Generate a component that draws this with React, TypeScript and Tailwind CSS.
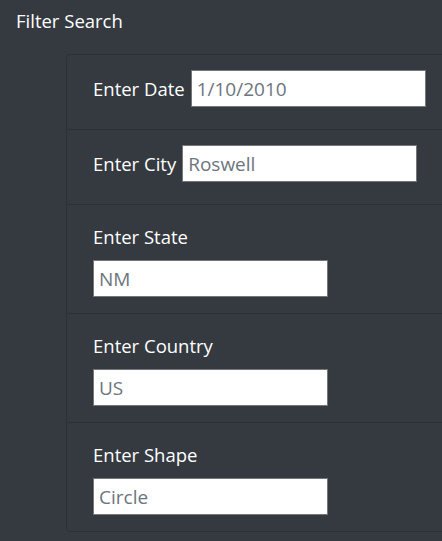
import React from 'react'

type fieldType = {
    label: string,
    value: string,
    inline?: boolean,
}

const fields: fieldType[] = [
    { label: 'Enter Date', value: '1/10/2010', inline: true },
    { label: 'Enter City', value: 'Roswell', inline: true },
    { label: 'Enter State', value: 'NM' },
    { label: 'Enter Country', value: 'US' },
    { label: 'Enter Shape', value: 'Circle' },
]

const Field = ({ label, value, inline }: fieldType) => {
    const input = (
        <input
            type="text"
            defaultValue={value}
            className="w-[235px] h-[37px] bg-white border border-[#767676] px-[5px] text-[19px] text-[#6c757d] outline-none"
        />
    )

    if (inline) {
        return (
            <li className="flex items-center gap-[6px] pl-[26px] pt-[15px] pb-[22px] border-t border-[#2c3136] first:border-t-0">
                <label className="text-[18.5px] leading-[30px] text-white">{label}</label>
                {input}
            </li>
        )
    }

    return (
        <li className="flex flex-col items-start pl-[26px] pt-[17px] pb-[16px] border-t border-[#2c3136]">
            <label className="text-[18.5px] leading-[30px] text-white mb-[8px]">{label}</label>
            {input}
        </li>
    )
}

export default function App() {
    return (
        <div className="w-full h-[541px] overflow-hidden bg-[#343a40] font-['Open_Sans',sans-serif]">
            <h5 className="pl-[16px] pt-[6px] text-[18.5px] leading-[30px] text-white">Filter Search</h5>

            <div className="ml-[66px] mt-[18px] w-[420px] border border-[#2c3136] rounded-[4px]">
                <ul>
                    {fields.map((f) => (
                        <Field key={f.label} {...f} />
                    ))}
                </ul>
            </div>
        </div>
    )
}
